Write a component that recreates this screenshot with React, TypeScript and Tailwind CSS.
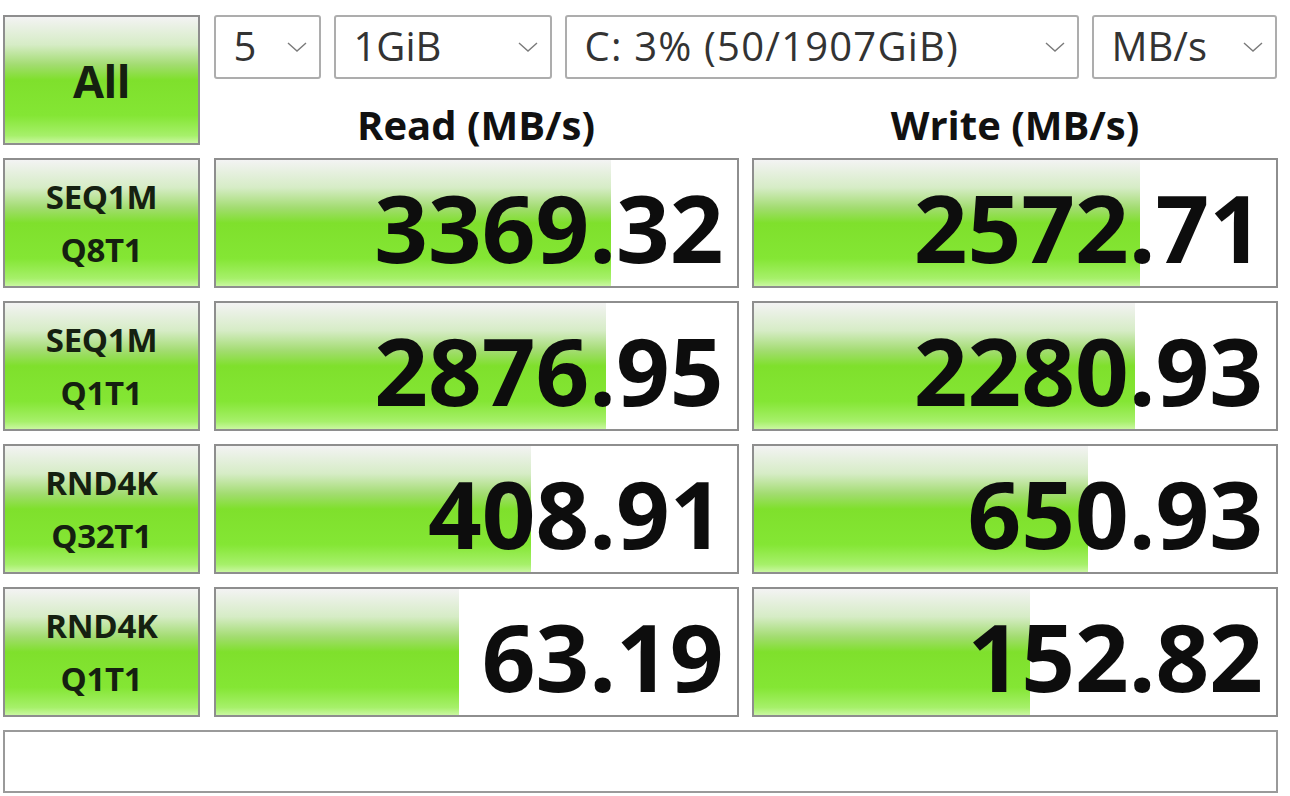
import React from "react";

type Result = { value: string; bar: number };

type Row = {
  line1: string;
  line2: string;
  read: Result;
  write: Result;
};

// bar widths in px, read from the reference (cell is ~525px wide)
const ROWS: Row[] = [
  { line1: "SEQ1M", line2: "Q8T1", read: { value: "3369.32", bar: 395 }, write: { value: "2572.71", bar: 386 } },
  { line1: "SEQ1M", line2: "Q1T1", read: { value: "2876.95", bar: 390 }, write: { value: "2280.93", bar: 381 } },
  { line1: "RND4K", line2: "Q32T1", read: { value: "408.91", bar: 315 }, write: { value: "650.93", bar: 334 } },
  { line1: "RND4K", line2: "Q1T1", read: { value: "63.19", bar: 243 }, write: { value: "152.82", bar: 276 } },
];

const GREEN =
  "bg-[linear-gradient(to_bottom,#f3f3f3_0%,#d6ecc6_22%,#a2dc70_38%,#7fe02c_50%,#84e634_78%,#a6f06a_94%,#c9f7a0_100%)]";

const FONT = { fontFamily: '"Open Sans", "Noto Sans", "Liberation Sans", sans-serif' };

function Chevron() {
  return (
    <svg width="20" height="10" viewBox="0 0 20 10" className="shrink-0">
      <path d="M1 1 L10 9 L19 1" fill="none" stroke="#7a7a7a" strokeWidth="1.4" />
    </svg>
  );
}

function Select({ label, width, wide }: { label: string; width: string; wide?: boolean }) {
  return (
    <div
      className={`${width} flex h-[64px] items-center justify-between rounded-[3px] border-2 border-[#adadad] bg-white pl-[18px] pr-[12px] text-[40px] leading-none text-[#333]`}
    >
      <span className={`-mt-[2px] ${wide ? "tracking-[1.2px]" : ""}`}>{label}</span>
      <Chevron />
    </div>
  );
}

function ResultCell({ r }: { r: Result }) {
  return (
    <div className="relative h-[130px] border-2 border-[#8e8e8e] bg-white">
      <div className={`absolute inset-y-0 left-0 ${GREEN}`} style={{ width: r.bar }} />
      <div className="relative flex h-full items-center justify-end pr-[13px] pt-[8px] text-[94px] font-bold leading-none text-[#0d0d0d]">
        {r.value}
      </div>
    </div>
  );
}

function TestButton({ children }: { children: React.ReactNode }) {
  return (
    <div
      className={`flex h-[130px] flex-col items-center justify-center border-2 border-[#8e8e8e] ${GREEN} font-bold leading-none text-[#152010]`}
    >
      {children}
    </div>
  );
}

export default function App() {
  return (
    <div className="min-h-screen w-[1290px] bg-white pl-[3px] pt-[15px]" style={FONT}>
      <div className="grid grid-cols-[197px_525px_526px] gap-x-[13.5px] gap-y-[13px]">
        {/* top-left run-all button */}
        <TestButton>
          <span className="text-[45px] tracking-[-0.5px]">All</span>
        </TestButton>

        {/* options row + column headers */}
        <div className="col-span-2 flex flex-col">
          <div className="flex gap-[13px]">
            <Select label="5" width="w-[107px]" />
            <Select label="1GiB" width="w-[218px]" />
            <Select label="C: 3% (50/1907GiB)" width="w-[514px]" wide />
            <Select label="MB/s" width="w-[185px]" />
          </div>
          <div className="grid flex-1 grid-cols-[525px_526px] gap-x-[13.5px] pt-[26px]">
            <div className="flex items-center justify-center text-[40px] font-bold leading-none text-[#111]">
              Read (MB/s)
            </div>
            <div className="flex items-center justify-center text-[40px] font-bold leading-none text-[#111]">
              Write (MB/s)
            </div>
          </div>
        </div>

        {ROWS.map((row, i) => (
          <React.Fragment key={i}>
            <TestButton>
              <span className="text-[33px] tracking-[-0.3px]">{row.line1}</span>
              <span className="mt-[20px] text-[33px] tracking-[-0.3px]">{row.line2}</span>
            </TestButton>
            <ResultCell r={row.read} />
            <ResultCell r={row.write} />
          </React.Fragment>
        ))}

        {/* comment / status box */}
        <div className="col-span-3 h-[63px] border-2 border-[#9a9a9a] bg-white" />
      </div>
    </div>
  );
}
